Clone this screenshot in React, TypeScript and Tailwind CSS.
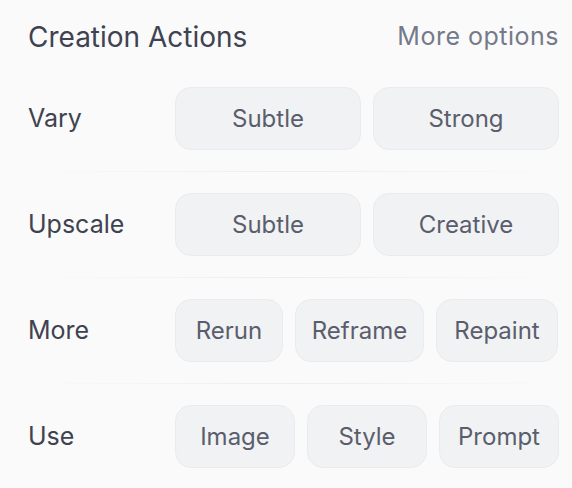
import React from 'react'

type Row = {
  label: string
  cols: string
  options: string[]
}

const rows: Row[] = [
  { label: 'Vary', cols: 'grid-cols-2', options: ['Subtle', 'Strong'] },
  { label: 'Upscale', cols: 'grid-cols-2', options: ['Subtle', 'Creative'] },
  { label: 'More', cols: 'grid-cols-[108px_129px_122px]', options: ['Rerun', 'Reframe', 'Repaint'] },
  { label: 'Use', cols: 'grid-cols-3', options: ['Image', 'Style', 'Prompt'] },
]

function ActionButton({ children }: { children: React.ReactNode }) {
  return (
    <button
      type="button"
      className="h-[63px] rounded-[16px] border border-[#eaebee] bg-[#f1f2f4] text-[24px] text-[#5a5e6c]"
    >
      {children}
    </button>
  )
}

export default function App() {
  return (
    <div
      className="min-h-[488px] w-[572px] bg-[#fafafa] pl-[28px] pr-[13px] pt-[13px]"
      style={{ fontFamily: 'Inter, "Noto Sans", sans-serif' }}
    >
      <div className="mb-[5px] flex h-[48px] items-center justify-between">
        <h2 className="text-[28px] font-normal text-[#3f4250]">Creation Actions</h2>
        <button type="button" className="text-[25px] tracking-[0.02em] text-[#757a8a]">
          More options
        </button>
      </div>

      <div className="flex flex-col">
        {rows.map((row, i) => (
          <div key={row.label}>
            {i > 0 && (
              <div className="h-px bg-gradient-to-r from-transparent via-[#ededef] to-transparent" />
            )}
            <div className="flex items-center py-[21px]">
              <span className="w-[147px] text-[25px] text-[#3f4250]">{row.label}</span>
              <div className={`grid flex-1 gap-[12px] ${row.cols}`}>
                {row.options.map((opt) => (
                  <ActionButton key={opt}>{opt}</ActionButton>
                ))}
              </div>
            </div>
          </div>
        ))}
      </div>
    </div>
  )
}
